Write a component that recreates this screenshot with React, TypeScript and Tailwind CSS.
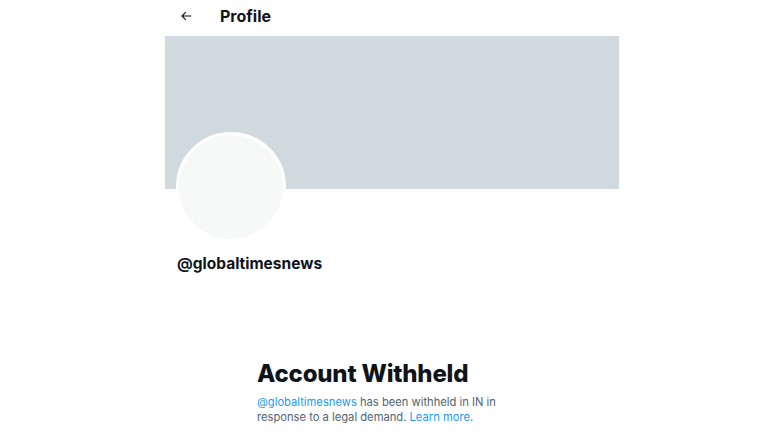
import React from "react";

export default function App() {
  return (
    <div
      className="w-[784px] h-[441px] bg-white overflow-hidden"
      style={{ fontFamily: "Inter, 'Noto Sans', sans-serif" }}
    >
      <div className="ml-[165px] w-[454px]">
        <div className="h-[36px] flex items-center pb-[4px]">
          <div className="w-[40px] flex justify-center pl-[1px]">
            <svg width="14" height="14" viewBox="0 0 24 24" fill="#0f1419">
              <path d="M7.414 13l5.043 5.04-1.414 1.42L3.586 12l7.457-7.46 1.414 1.42L7.414 11H21v2H7.414z" />
            </svg>
          </div>
          <div className="ml-[15px] text-[16px] font-bold text-[#0f1419]">Profile</div>
        </div>
        <div className="h-[153px] bg-[#cfd9de]" />
        <div className="relative h-[60px]">
          <div className="absolute left-[11px] top-[-57px] w-[110px] h-[110px] rounded-full bg-[#f7f9f9] border-[3px] border-white" />
        </div>
        <div className="pl-[12px] pt-[5px] text-[15.5px] font-bold text-[#0f1419] leading-[20px]">
          @globaltimesnews
        </div>
      </div>
      <div className="ml-[257px] mt-[86px] w-[300px]">
        <div className="text-[24px] font-extrabold text-[#0f1419] leading-[28px] tracking-[-0.2px]">
          Account Withheld
        </div>
        <div className="mt-[7px] text-[11.2px] leading-[15px] text-[#536471] whitespace-nowrap">
          <span className="text-[#1d9bf0]">@globaltimesnews</span> has been withheld in IN in
          <br />
          response to a legal demand. <span className="text-[#1d9bf0]">Learn more</span>.
        </div>
      </div>
    </div>
  );
}
